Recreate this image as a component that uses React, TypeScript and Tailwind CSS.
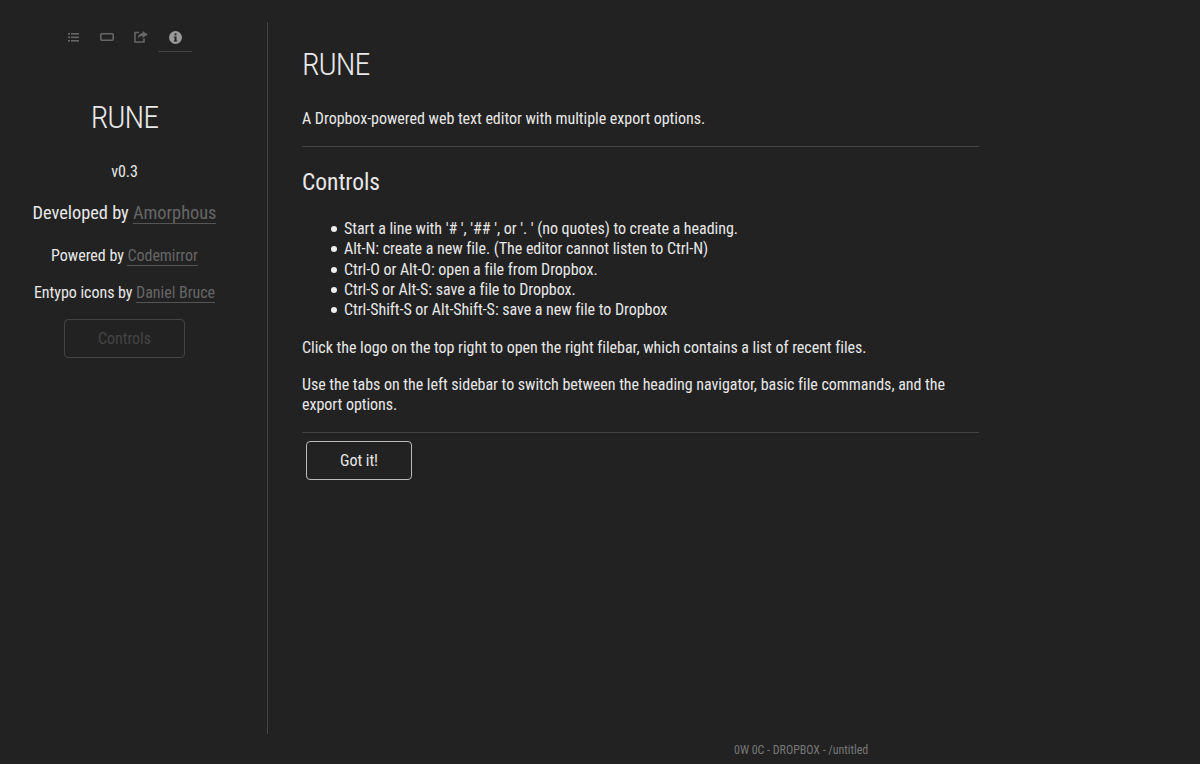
function Tab({ active, children }: { active?: boolean; children: React.ReactNode }) {
  return (
    <div className={`flex h-[30px] w-[34px] items-center justify-center border-b pt-[1px] ${active ? 'border-[#444]' : 'border-transparent'}`}>
      {children}
    </div>
  );
}

function SideLink({ children }: { children: React.ReactNode }) {
  return <a className="border-b border-[#555] text-[#666]">{children}</a>;
}

const controls = [
  "Start a line with '# ', '## ', or '. ' (no quotes) to create a heading.",
  'Alt-N: create a new file. (The editor cannot listen to Ctrl-N)',
  'Ctrl-O or Alt-O: open a file from Dropbox.',
  'Ctrl-S or Alt-S: save a file to Dropbox.',
  'Ctrl-Shift-S or Alt-Shift-S: save a new file to Dropbox',
];

export default function App() {
  return (
    <div className="relative h-[764px] w-[1200px] overflow-hidden bg-[#222] font-['Roboto',sans-serif] font-normal tracking-[-0.03px] text-[#e8e8e8] [font-stretch:75%]">
      <div className="flex h-full items-start pt-[22px]">
        <aside className="flex h-[712px] w-[268px] flex-col border-r border-[#444] pr-[18px] text-center">
          <div className="flex justify-center pr-[1px]">
            <Tab>
              <svg className="ml-[1px]" width="11" height="9" viewBox="0 0 11 9" fill="#666">
                <rect x="0" y="0" width="2" height="1.6" /><rect x="3" y="0" width="8" height="1.6" />
                <rect x="0" y="3.5" width="2" height="1.6" /><rect x="3" y="3.5" width="8" height="1.6" />
                <rect x="0" y="7" width="2" height="1.6" /><rect x="3" y="7" width="8" height="1.6" />
              </svg>
            </Tab>
            <Tab>
              <svg width="14" height="8" viewBox="0 0 14 8" fill="none" stroke="#666" strokeWidth="1.6">
                <rect x="0.8" y="0.8" width="12.4" height="6.4" rx="1" />
              </svg>
            </Tab>
            <Tab>
              <svg width="14" height="12" viewBox="0 0 14 12" fill="none">
                <path d="M5 1.5H1v9.5h9V7.5" stroke="#666" strokeWidth="1.6" />
                <path d="M8.5 0L14 3.5 8.5 7V5C6 5 4.7 6 3.8 8 3.8 5 5.5 2.3 8.5 2z" fill="#666" />
              </svg>
            </Tab>
            <Tab active>
              <svg width="13" height="13" viewBox="0 0 13 13">
                <circle cx="6.5" cy="6.5" r="6.5" fill="#999" />
                <rect x="5.6" y="2.4" width="1.9" height="1.9" fill="#222" />
                <path d="M4.8 5.4h2.7v4.2h.8v1H4.8v-1h.8V6.4h-.8z" fill="#222" />
              </svg>
            </Tab>
          </div>
          <h1 className="mt-[43px] text-[32px] leading-[44px] font-light tracking-[-1px]">RUNE</h1>
          <p className="mt-[23px] text-[16px] leading-[20px]">v0.3</p>
          <p className="mt-[19px] text-[18.4px] leading-[24px]">Developed by <SideLink>Amorphous</SideLink></p>
          <p className="mt-[21px] text-[16px] leading-[20px]">Powered by <SideLink>Codemirror</SideLink></p>
          <p className="mt-[17px] text-[16px] leading-[20px]">Entypo icons by <SideLink>Daniel Bruce</SideLink></p>
          <button className="mx-auto mt-[16px] h-[39px] w-[121px] rounded-[4px] border border-[#444] text-[16px] text-[#444]">Controls</button>
        </aside>
        <main className="ml-[34px] w-[677px] text-[16px] leading-[20px]">
          <h1 className="mt-[20px] text-[32px] leading-[44px] font-light tracking-[-1px]">RUNE</h1>
          <p className="mt-[23px]">A Dropbox-powered web text editor with multiple export options.</p>
          <hr className="mt-[17px] border-[#444]" />
          <h2 className="mt-[20px] text-[23.5px] leading-[30px] font-normal">Controls</h2>
          <ul className="mt-[22px] pl-[29px] leading-[20.3px]">
            {controls.map(item => (
              <li key={item} className="flex items-center gap-[7px]">
                <span className="size-[6px] rounded-full bg-[#eee]" />
                {item}
              </li>
            ))}
          </ul>
          <p className="mt-[18px]">Click the logo on the top right to open the right filebar, which contains a list of recent files.</p>
          <p className="mt-[17px]">Use the tabs on the left sidebar to switch between the heading navigator, basic file commands, and the export options.</p>
          <hr className="mt-[17px] border-[#444]" />
          <button className="mt-[8px] ml-[4px] h-[39px] w-[106px] rounded-[4px] border border-[#bbb] text-[16px]">Got it!</button>
        </main>
      </div>
      <div className="absolute left-[734px] top-[743px] text-[12px] leading-[14px] text-[#777]">0W 0C - DROPBOX - /untitled</div>
    </div>
  );
}
